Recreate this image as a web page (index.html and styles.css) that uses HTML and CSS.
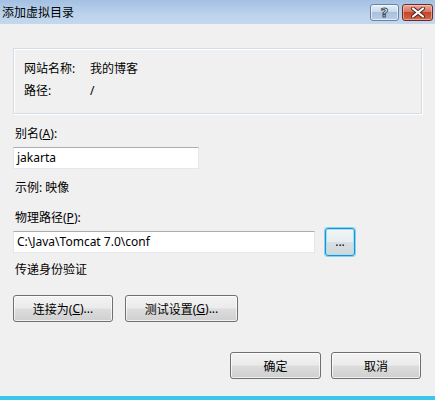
FILE: index.html
```html
<!DOCTYPE html>
<html lang="zh-CN">
<head>
  <meta charset="UTF-8">
  <title>添加虚拟目录</title>
  <link rel="stylesheet" href="styles.css">
</head>
<body>
  <div class="window">
    <div class="titlebar">
      <span class="title">添加虚拟目录</span>
      <div class="caption-buttons">
        <div class="cap-btn help"><span class="help-mark">?</span></div>
        <div class="cap-btn close">
          <svg width="16" height="11" viewBox="0 0 16 11">
            <path d="M3 1.5 L13 9.5 M13 1.5 L3 9.5" stroke="#4a2420" stroke-width="4" stroke-linecap="round"/>
            <path d="M3 1.5 L13 9.5 M13 1.5 L3 9.5" stroke="#fff" stroke-width="2.2" stroke-linecap="round"/>
          </svg>
        </div>
      </div>
    </div>

    <div class="content">
      <div class="info-panel">
        <div class="info-row">
          <span class="info-label">网站名称:</span>
          <span>我的博客</span>
        </div>
        <div class="info-row">
          <span class="info-label">路径:</span>
          <span>/</span>
        </div>
      </div>

      <div class="label alias-label">别名(<u>A</u>):</div>
      <div class="textbox alias-box">jakarta</div>
      <div class="label example">示例: 映像</div>

      <div class="label path-label">物理路径(<u>P</u>):</div>
      <div class="path-row">
        <div class="textbox path-box">C:\Java\Tomcat 7.0\conf</div>
        <div class="btn browse">...</div>
      </div>

      <div class="label auth">传递身份验证</div>
      <div class="btn-row">
        <div class="btn connect">连接为(<u>C</u>)...</div>
        <div class="btn test">测试设置(<u>G</u>)...</div>
      </div>

      <div class="dialog-buttons">
        <div class="btn ok">确定</div>
        <div class="btn cancel">取消</div>
      </div>
    </div>
    <div class="bottom-edge"></div>
  </div>
</body>
</html>
```

FILE: styles.css
```css
* {
  margin: 0;
  padding: 0;
  box-sizing: border-box;
}
body {
  width: 435px;
  height: 400px;
  overflow: hidden;
  background-color: #f0f0f0;
  font-family: "Noto Sans", "Noto Sans CJK SC", sans-serif;
  font-size: 12px;
  color: #000;
}
.window {
  height: 400px;
  display: flex;
  flex-direction: column;
}

/* title bar */
.titlebar {
  height: 24px;
  display: flex;
  justify-content: space-between;
  align-items: flex-start;
  background: linear-gradient(to bottom, #a3c0e2, #bcd3ec 60%, #c3d8ee);
}
.title {
  padding: 4px 0 0 2px;
  line-height: 16px;
  font-family: "Noto Sans CJK SC", sans-serif;
}
.caption-buttons {
  display: flex;
  gap: 3px;
  padding: 4px 2px 0 0;
}
.cap-btn {
  height: 17px;
  border-radius: 3px;
  display: flex;
  justify-content: center;
  align-items: center;
}
.help {
  width: 29px;
  border: 1px solid #6a819f;
  background: linear-gradient(to bottom, #e6eef7, #c9d9ec 45%, #a9c0dc 50%, #b9cee6);
  box-shadow: inset 0 0 0 1px rgba(255,255,255,0.6);
}
.help-mark {
  font-family: "DejaVu Sans", sans-serif;
  font-weight: bold;
  font-size: 13px;
  line-height: 13px;
  color: #fff;
  -webkit-text-stroke: 1px #3c4a5c;
}
.close {
  width: 31px;
  border: 1px solid #6e2b24;
  background: linear-gradient(to bottom, #e9a99b, #d9765f 45%, #c4442c 50%, #d26a4a);
  box-shadow: inset 0 0 0 1px rgba(255,220,210,0.5);
}

/* body */
.content {
  flex: 1;
  padding: 24px 13px 0 13px;
}
.info-panel {
  height: 66px;
  border: 1px solid #d3dde8;
  box-shadow: inset 1px 1px 0 #fff, 1px 1px 0 #fff;
  padding: 12px 10px 0 10px;
  display: flex;
  flex-direction: column;
  gap: 6px;
}
.info-row {
  display: flex;
  line-height: 16px;
}
.info-label {
  width: 66px;
}
.label {
  line-height: 16px;
  padding-left: 2px;
}
.alias-label {
  margin-top: 12px;
}
.textbox {
  height: 22px;
  line-height: 20px;
  padding-left: 3px;
  background-color: #fff;
  border: 1px solid #e2e8ee;
  border-top-color: #abadb3;
  white-space: nowrap;
}
.alias-box {
  width: 186px;
  margin-top: 5px;
}
.example {
  margin-top: 11px;
}
.path-label {
  margin-top: 14px;
}
.path-row {
  display: flex;
  align-items: center;
  gap: 10px;
  margin-top: 2px;
}
.path-box {
  width: 302px;
}

/* buttons */
.btn {
  display: flex;
  justify-content: center;
  align-items: center;
  height: 27px;
  border: 1px solid #707070;
  border-radius: 3px;
  background: linear-gradient(to bottom, #f3f3f3, #ebebeb 48%, #dddddd 52%, #cfcfcf);
  box-shadow: inset 0 0 0 1px rgba(255,255,255,0.7);
  white-space: nowrap;
}
.browse {
  width: 30px;
  height: 28px;
  border-color: #2c8bc4;
  background: linear-gradient(to bottom, #f2f6f8, #e6ecef 48%, #d8dfe3 52%, #d0d7db);
  box-shadow: 0 0 0 1px #7cd6f6, inset 0 0 0 1px #9de4fb;
  padding-bottom: 2px;
}
.auth {
  margin-top: 6px;
}
.btn-row {
  display: flex;
  gap: 12px;
  margin-top: 17px;
}
.connect {
  width: 100px;
}
.test {
  width: 113px;
}
.dialog-buttons {
  display: flex;
  justify-content: flex-end;
  gap: 10px;
  margin-top: 30px;
  padding-right: 1px;
}
.ok {
  width: 91px;
}
.cancel {
  width: 90px;
}
.bottom-edge {
  height: 4px;
  background-color: #3cc6ea;
}
```
